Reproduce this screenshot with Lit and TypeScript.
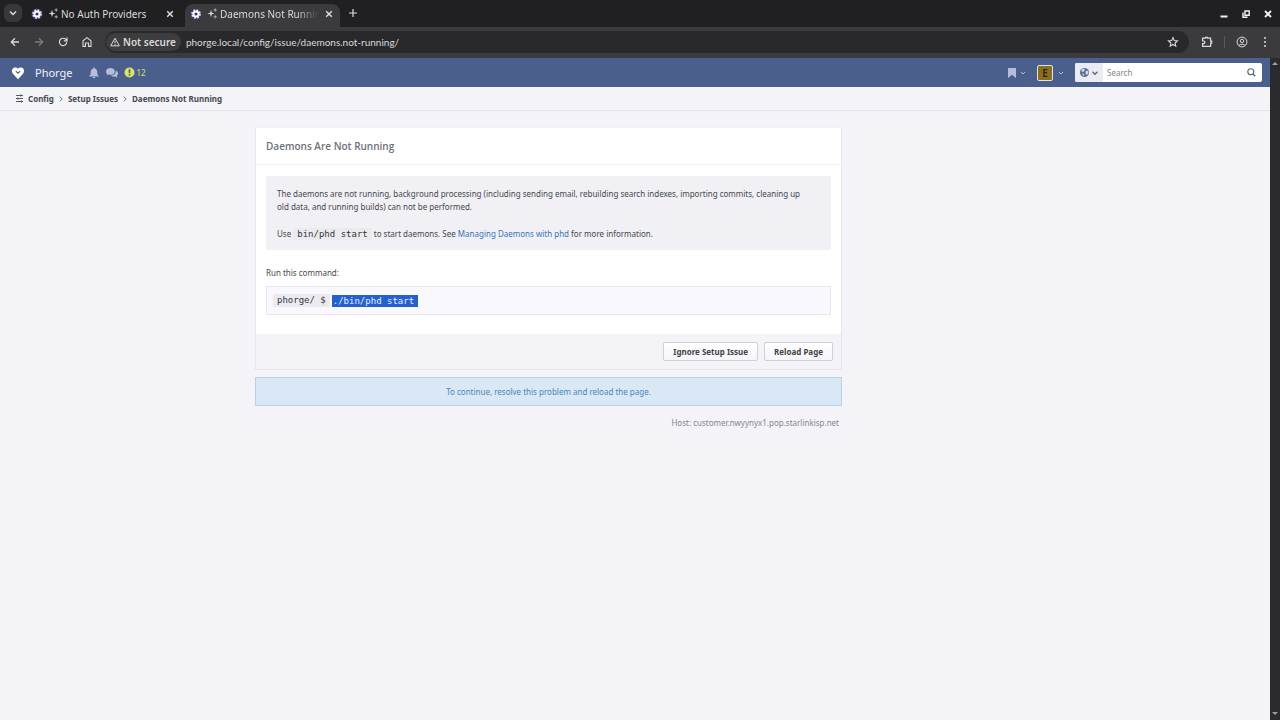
import { LitElement, html, css, svg } from "lit";
import { customElement } from "lit/decorators.js";

const chevron = svg`<path d="M3 4.5 6 7.5 9 4.5" fill="none" stroke="currentColor" stroke-width="1.5"/>`;
const cross = svg`<path d="M3.2 3.2 8.8 8.8M8.8 3.2 3.2 8.8" fill="none" stroke="currentColor" stroke-width="1.5"/>`;

const favicon = html`<svg width="12" height="12" viewBox="0 0 12 12">
  <circle cx="6" cy="6" r="5.6" fill="#3d3762"/>
  <circle cx="6" cy="6" r="4" fill="none" stroke="#d9d5f5" stroke-width="1.8" stroke-dasharray="1.8 1.34"/>
  <circle cx="6" cy="6" r="2.6" fill="none" stroke="#fff" stroke-width="2"/>
</svg>`;

const sparkles = html`<svg width="11" height="11" viewBox="0 0 11 11">
  <path d="M4 1.8 4.8 4.7 7.6 5.5 4.8 6.3 4 9.2 3.2 6.3 0.4 5.5 3.2 4.7Z" fill="#dcdadd"/>
  <path d="M8.2 0.4v3.2M6.6 2h3.2M8.2 7.2v3.2M6.6 8.8h3.2" stroke="#b9b7ba" stroke-width="0.9"/>
</svg>`;

@customElement("browser-chrome")
class BrowserChrome extends LitElement {
  static styles = css`
    :host {
      display: block;
      font-family: "Noto Sans", sans-serif;
      color: #dcdadd;
      background: #201f22;
    }
    svg { display: block; flex: none; }
    button {
      display: flex;
      align-items: center;
      justify-content: center;
      padding: 0;
      border: 0;
      background: none;
      color: inherit;
      font: inherit;
    }
    .strip { display: flex; height: 27px; padding-left: 4px; }
    .list {
      width: 18px;
      height: 18px;
      margin-top: 4px;
      border-radius: 6px;
      background: #38373a;
    }
    .tab {
      display: flex;
      align-items: center;
      width: 155px;
      height: 23px;
      margin: 4px 0 0 4px;
      box-sizing: border-box;
      padding: 0 5px 4px 5px;
      border-radius: 8px 8px 0 0;
    }
    .tab.active { background: #3b3a3d; }
    .title {
      display: flex;
      align-items: center;
      flex: 1;
      gap: 5px;
      min-width: 0;
    }
    .label {
      display: flex;
      align-items: center;
      gap: 2px;
      flex: 1;
      overflow: hidden;
      white-space: nowrap;
      font-size: 10px;
      line-height: 16px;
    }
    .active .label {
      mask-image: linear-gradient(to right, #000 80%, transparent 100%);
    }
    .tab .close { margin-left: 4px; }
    .new { width: 20px; height: 18px; margin: 4px 0 0 3px; }
    .window {
      display: flex;
      gap: 10px;
      align-items: center;
      margin-left: auto;
      padding-right: 6px;
      color: #f4f2f5;
    }
    .bar {
      display: flex;
      align-items: center;
      height: 30px;
      padding: 0 9px 1px 9px;
      background: #3b3a3d;
    }
    .nav { display: flex; gap: 12px; padding: 0 12px 0 0; }
    .dim { color: #7d7b80; }
    .address {
      display: flex;
      align-items: center;
      flex: 1;
      height: 22px;
      padding: 0 10px 0 1px;
      border-radius: 11px;
      background: #29282b;
    }
    .security {
      height: 18px;
      gap: 3px;
      padding: 0 5px 0 4px;
      border-radius: 9px;
      background: #3d3c3f;
      font-size: 10px;
      font-weight: 600;
    }
    .url {
      flex: 1;
      margin-left: 5px;
      padding: 0;
      border: 0;
      outline: 0;
      background: none;
      color: #dcdadd;
      font-family: Lato, "Noto Sans", sans-serif;
      font-size: 10px;
    }
    .tools { display: flex; align-items: center; gap: 11px; padding-left: 12px; }
    .rule { width: 1px; height: 12px; background: #59585c; }
  `;

  render() {
    return html`
      <div class="strip" role="tablist">
        <button class="list" aria-label="Search tabs">
          <svg width="12" height="12" viewBox="0 0 12 12">${chevron}</svg>
        </button>
        <div class="tab">
          <button class="title" role="tab">${favicon}<span class="label">${sparkles}No Auth Providers</span></button>
          <button class="close" aria-label="Close tab"><svg width="12" height="12" viewBox="0 0 12 12">${cross}</svg></button>
        </div>
        <div class="tab active">
          <button class="title" role="tab" aria-selected="true">${favicon}<span class="label">${sparkles}Daemons Not Running</span></button>
          <button class="close" aria-label="Close tab"><svg width="12" height="12" viewBox="0 0 12 12">${cross}</svg></button>
        </div>
        <button class="new" aria-label="New tab">
          <svg width="12" height="12" viewBox="0 0 12 12"><path d="M6 2v8M2 6h8" stroke="currentColor" stroke-width="1.2"/></svg>
        </button>
        <div class="window">
          <button aria-label="Minimize"><svg width="12" height="12" viewBox="0 0 12 12"><path d="M2.5 8.5h7" stroke="currentColor" stroke-width="2"/></svg></button>
          <button aria-label="Restore"><svg width="12" height="12" viewBox="0 0 12 12"><path d="M5 3h4.2v4.2H5ZM3 4.5v4.7h4.5" fill="none" stroke="currentColor" stroke-width="1.4"/></svg></button>
          <button aria-label="Close"><svg width="12" height="12" viewBox="0 0 12 12"><path d="M3 3 9 9M9 3 3 9" stroke="currentColor" stroke-width="1.8"/></svg></button>
        </div>
      </div>
      <div class="bar">
        <div class="nav">
          <button aria-label="Back"><svg width="12" height="12" viewBox="0 0 12 12"><path d="M10 6H2.5M6 2.3 2.3 6 6 9.7" fill="none" stroke="currentColor" stroke-width="1.3"/></svg></button>
          <button class="dim" aria-label="Forward"><svg width="12" height="12" viewBox="0 0 12 12"><path d="M2 6h7.5M6 2.3 9.7 6 6 9.7" fill="none" stroke="currentColor" stroke-width="1.3"/></svg></button>
          <button aria-label="Reload"><svg width="12" height="12" viewBox="0 0 12 12"><path d="M9.8 6.3A3.7 3.7 0 1 1 8.8 3.4L10 4.7M10 1.5v3.3H6.8" fill="none" stroke="currentColor" stroke-width="1.2"/></svg></button>
          <button aria-label="Home"><svg width="12" height="12" viewBox="0 0 12 12"><path d="M2 10.4V4.8L6 1.6 10 4.8V10.4H7.5V7H4.5V10.4Z" fill="none" stroke="currentColor" stroke-width="1.1"/></svg></button>
        </div>
        <div class="address">
          <button class="security">
            <svg width="10" height="10" viewBox="0 0 10 10"><path d="M5 1.2 9.3 8.8H0.7Z" fill="none" stroke="currentColor"/><path d="M5 3.8v2.4M5 6.9v1" stroke="currentColor"/></svg>
            Not secure
          </button>
          <input class="url" aria-label="Address" value="phorge.local/config/issue/daemons.not-running/" />
          <button aria-label="Bookmark this tab"><svg width="12" height="12" viewBox="0 0 12 12"><path d="M6 1.6 7.3 4.6 10.5 4.9 8.1 7 8.8 10.2 6 8.5 3.2 10.2 3.9 7 1.5 4.9 4.7 4.6Z" fill="none" stroke="currentColor" stroke-width="1.1"/></svg></button>
        </div>
        <div class="tools">
          <button aria-label="Extensions"><svg width="12" height="12" viewBox="0 0 12 12"><path d="M1.6 2.2H4.5V1.3H6.5V2.2H9.6V5.2H10.7V7.2H9.6V10.4H1.6V7.6H2.6A1.3 1.3 0 0 0 2.6 5H1.6Z" fill="none" stroke="currentColor" stroke-width="1.2"/></svg></button>
          <span class="rule"></span>
          <button aria-label="Profile"><svg width="12" height="12" viewBox="0 0 12 12"><g fill="none" stroke="currentColor"><circle cx="6" cy="6" r="4.9"/><circle cx="6" cy="4.9" r="1.7"/><path d="M2.8 9.5C4 7.8 8 7.8 9.2 9.5"/></g></svg></button>
          <button aria-label="Menu"><svg width="12" height="12" viewBox="0 0 12 12" fill="currentColor"><circle cx="6" cy="2" r="1"/><circle cx="6" cy="6" r="1"/><circle cx="6" cy="10" r="1"/></svg></button>
        </div>
      </div>
    `;
  }
}

@customElement("phorge-page")
class PhorgePage extends LitElement {
  static styles = css`
    :host {
      display: block;
      background: #f3f3f8;
      color: #46484d;
      font-family: "Noto Sans", sans-serif;
      font-size: 8px;
      line-height: 13px;
    }
    svg { display: block; flex: none; }
    p { margin: 0; }
    button, input { font-family: inherit; }
    a { color: #3a74b5; text-decoration: none; }
    .plain {
      display: flex;
      align-items: center;
      padding: 0;
      border: 0;
      background: none;
      color: inherit;
    }
    .top {
      display: flex;
      align-items: center;
      height: 29px;
      padding: 0 8px 0 11px;
      background: #4a5f8c;
      color: #b4bddb;
    }
    .brand {
      display: flex;
      align-items: center;
      gap: 10px;
      color: #f0f2fa;
      font-size: 11px;
      line-height: 16px;
    }
    .alerts { display: flex; align-items: center; gap: 6px; margin-left: 15px; }
    .issues { gap: 2px; color: #dbe36c; font-size: 8px; }
    .account { display: flex; align-items: center; gap: 10px; margin-left: auto; }
    .account .plain { gap: 2px; }
    .avatar {
      width: 14px;
      height: 14px;
      margin-right: 2px;
      border: 1px solid #dfe3f0;
      border-radius: 2px;
      background: #8a6d1e;
      color: #2e2408;
      font-size: 10px;
      font-weight: 600;
      line-height: 14px;
      text-align: center;
    }
    .search {
      display: flex;
      align-items: center;
      width: 187px;
      height: 19px;
      box-sizing: border-box;
      padding-right: 5px;
      border-radius: 2px;
      background: #fff;
      color: #5b6475;
      overflow: hidden;
    }
    .search .scope { height: 19px; gap: 0; padding: 0 3px 0 4px; background: #ebebf3; }
    .query {
      flex: 1;
      min-width: 0;
      padding: 0 0 0 4px;
      border: 0;
      outline: 0;
      background: none;
      font-size: 8px;
    }
    .query::placeholder { color: #82858c; opacity: 1; }
    .crumbs {
      display: flex;
      align-items: center;
      gap: 3px;
      height: 23px;
      padding-left: 14px;
      border-bottom: 1px solid #e3e4ea;
      font-weight: 700;
    }
    .crumbs a { color: #46484d; }
    .crumbs .first { display: flex; align-items: center; gap: 3px; }
    .column { width: 587px; max-width: 80%; margin: 16px 0 0 20%; padding-left: 1px; }
    .card { border: 1px solid #e6e7ee; border-top-color: #f0f0f6; background: #fff; }
    .heading {
      margin: 0;
      padding: 10px;
      border-bottom: 1px solid #f0f0f7;
      color: #6e7177;
      font-family: "Open Sans", "Noto Sans", sans-serif;
      font-size: 10px;
      font-weight: 600;
      line-height: 16px;
    }
    .body { padding: 11px 10px 19px; }
    .notice {
      display: grid;
      gap: 14px;
      padding: 11px 20px 10px 11px;
      background: #f0f0f5;
    }
    .mono {
      padding: 1px 4px;
      background: #ebebef;
      font-family: "DejaVu Sans Mono", monospace;
      font-size: 9px;
      line-height: 11px;
      color: #333539;
    }
    .caption { margin-top: 16px; }
    .command {
      display: flex;
      align-items: center;
      gap: 2px;
      margin-top: 7px;
      padding: 7px 6px;
      border: 1px solid #e6e7ec;
      background: #f8f8fe;
    }
    .picked {
      padding: 0 4px 0 1px;
      background: #2560cf;
      color: #e9efff;
      font-family: "DejaVu Sans Mono", monospace;
      font-size: 9px;
      line-height: 12px;
    }
    .actions {
      display: flex;
      justify-content: flex-end;
      gap: 6px;
      padding: 8px;
      background: #f3f3f8;
    }
    .action {
      height: 19px;
      padding: 0 9px;
      border: 1px solid #cfd0d8;
      border-radius: 2px;
      background: linear-gradient(#fff, #f5f5fa);
      color: #3f4147;
      font-size: 8px;
      font-weight: 700;
      line-height: 13px;
    }
    .hint {
      margin-top: 7px;
      padding: 7px;
      border: 1px solid #b9d2e8;
      background: #dae7f4;
      color: #4a86bb;
      text-align: center;
    }
    .host { margin-top: 10px; padding-right: 3px; color: #85878d; text-align: right; }
  `;

  render() {
    const caret = html`<svg width="8" height="8" viewBox="0 0 12 12">${chevron}</svg>`;
    const arrow = html`<svg width="8" height="8" viewBox="0 0 8 8"><path d="M2.8 1.6 5.2 4 2.8 6.4" fill="none" stroke="#6b6e75"/></svg>`;
    return html`
      <header class="top">
        <a class="brand" href="#">
          <svg width="14" height="14" viewBox="0 0 14 14"><path d="M7 13.2 1.7 7.4C0 5 1.3 1.6 4 1.6 5.4 1.6 6.4 2.1 7 2.8 7.6 2.1 8.6 1.6 10 1.6 12.7 1.6 14 5 12.3 7.4Z" fill="#fff"/><path d="M4.8 5.2 7 7.2 9.2 5.2" fill="none" stroke="#4a5f8c" stroke-width="1.1"/></svg>
          Phorge
        </a>
        <div class="alerts">
          <button class="plain" aria-label="Notifications"><svg width="12" height="12" viewBox="0 0 12 12"><path d="M6 0.6C6.6 0.6 6.8 1 6.8 1.5 8.7 2 9.3 3.5 9.3 5.3 9.3 7.4 9.8 8.3 11 9.4H1C2.2 8.3 2.7 7.4 2.7 5.3 2.7 3.5 3.3 2 5.2 1.5 5.2 1 5.4 0.6 6 0.6ZM4.7 10H7.3A1.3 1.3 0 0 1 4.7 10Z" fill="currentColor"/></svg></button>
          <button class="plain" aria-label="Messages"><svg width="12" height="12" viewBox="0 0 12 12" fill="currentColor"><path d="M4.4 1C7 1 8.8 2.5 8.8 4.4S7 7.8 4.4 7.8C3.8 7.8 3.4 7.8 2.9 7.6 2.2 8.1 1.4 8.4 0.6 8.5 1 8 1.3 7.5 1.3 6.9 0.5 6.3 0 5.4 0 4.4 0 2.5 1.9 1 4.4 1Z"/><path d="M9.7 3.6C11.1 4.2 12 5.2 12 6.5 12 7.4 11.5 8.2 10.7 8.8 10.8 9.4 11.1 9.9 11.5 10.4 10.6 10.4 9.8 10 9.2 9.5 7.4 9.9 5.7 9.5 4.7 8.6 7.7 8.6 10 6.8 9.7 3.6Z"/></svg></button>
          <button class="plain issues" aria-label="12 setup issues"><svg width="11" height="11" viewBox="0 0 11 11"><circle cx="5.5" cy="5.5" r="5" fill="currentColor"/><path d="M5.5 2.3v4M5.5 7.2v1.5" stroke="#4a5f5c" stroke-width="1.6"/></svg>12</button>
        </div>
        <div class="account">
          <button class="plain" aria-label="Favorites"><svg width="10" height="12" viewBox="0 0 10 12"><path d="M1 1H9V11L5 7.7 1 11Z" fill="currentColor"/></svg>${caret}</button>
          <button class="plain" aria-label="Account"><span class="avatar">E</span>${caret}</button>
          <form class="search" role="search">
            <button class="plain scope" type="button" aria-label="Search scope">
              <svg width="11" height="11" viewBox="0 0 12 12"><circle cx="6" cy="6" r="5" fill="#5d7296"/><path d="M3 2.4 5.8 2 6.2 3.8 4.4 5.4 3 5ZM7.4 4.6 10 4.2 10.4 6.6 8.6 8.8 7.2 7ZM3.8 7 5.6 7.6 5.2 9.8 4 9Z" fill="#d9dfea"/></svg>
              <svg width="10" height="10" viewBox="0 0 12 12">${chevron}</svg>
            </button>
            <input class="query" type="search" placeholder="Search" aria-label="Search" />
            <button class="plain" type="submit" aria-label="Run search"><svg width="11" height="11" viewBox="0 0 11 11"><circle cx="4.8" cy="4.8" r="3" fill="none" stroke="currentColor" stroke-width="1.1"/><path d="M7 7 9.2 9.2" stroke="currentColor" stroke-width="1.4"/></svg></button>
          </form>
        </div>
      </header>
      <nav class="crumbs" aria-label="Breadcrumb">
        <a class="first" href="#"><svg width="11" height="11" viewBox="0 0 11 11"><path d="M2 2.5h7M2 5.5h7M2 8.5h7M6.8 1.4v2.2M3.8 4.4v2.2M7.4 7.4v2.2" stroke="#56595f" fill="none"/></svg>Config</a>
        ${arrow}<a href="#">Setup Issues</a>${arrow}<a href="#" aria-current="page">Daemons Not Running</a>
      </nav>
      <main class="column">
        <section class="card">
          <h1 class="heading">Daemons Are Not Running</h1>
          <div class="body">
            <div class="notice">
              <p>The daemons are not running, background processing (including sending email, rebuilding search indexes, importing commits, cleaning up old data, and running builds) can not be performed.</p>
              <p>Use <code class="mono">bin/phd start</code> to start daemons. See <a href="#">Managing Daemons with phd</a> for more information.</p>
            </div>
            <p class="caption">Run this command:</p>
            <div class="command"><code class="mono">phorge/ $</code><code class="picked">./bin/phd start</code></div>
          </div>
          <div class="actions">
            <button class="action">Ignore Setup Issue</button>
            <button class="action">Reload Page</button>
          </div>
        </section>
        <p class="hint">To continue, resolve this problem and reload the page.</p>
        <p class="host">Host: customer.nwyynyx1.pop.starlinkisp.net</p>
      </main>
    `;
  }
}

@customElement("app-root")
class AppRoot extends LitElement {
  static styles = css`
    :host { display: flex; flex-direction: column; height: 100vh; overflow: hidden; }
    .view { display: flex; flex: 1; min-height: 0; }
    .page { flex: 1; min-width: 0; }
    .scroll {
      display: flex;
      flex-direction: column;
      align-items: center;
      justify-content: space-between;
      width: 10px;
      padding: 3px 0 4px;
      box-sizing: border-box;
      background: #2b2a2e;
    }
    .scroll svg { display: block; }
  `;

  render() {
    return html`
      <browser-chrome></browser-chrome>
      <div class="view">
        <phorge-page class="page"></phorge-page>
        <div class="scroll" aria-hidden="true">
          <svg width="6" height="5" viewBox="0 0 6 5"><path d="M3 1 6 4H0Z" fill="#a09fa3"/></svg>
          <svg width="6" height="5" viewBox="0 0 6 5"><path d="M3 4 6 1H0Z" fill="#a09fa3"/></svg>
        </div>
      </div>
    `;
  }
}
